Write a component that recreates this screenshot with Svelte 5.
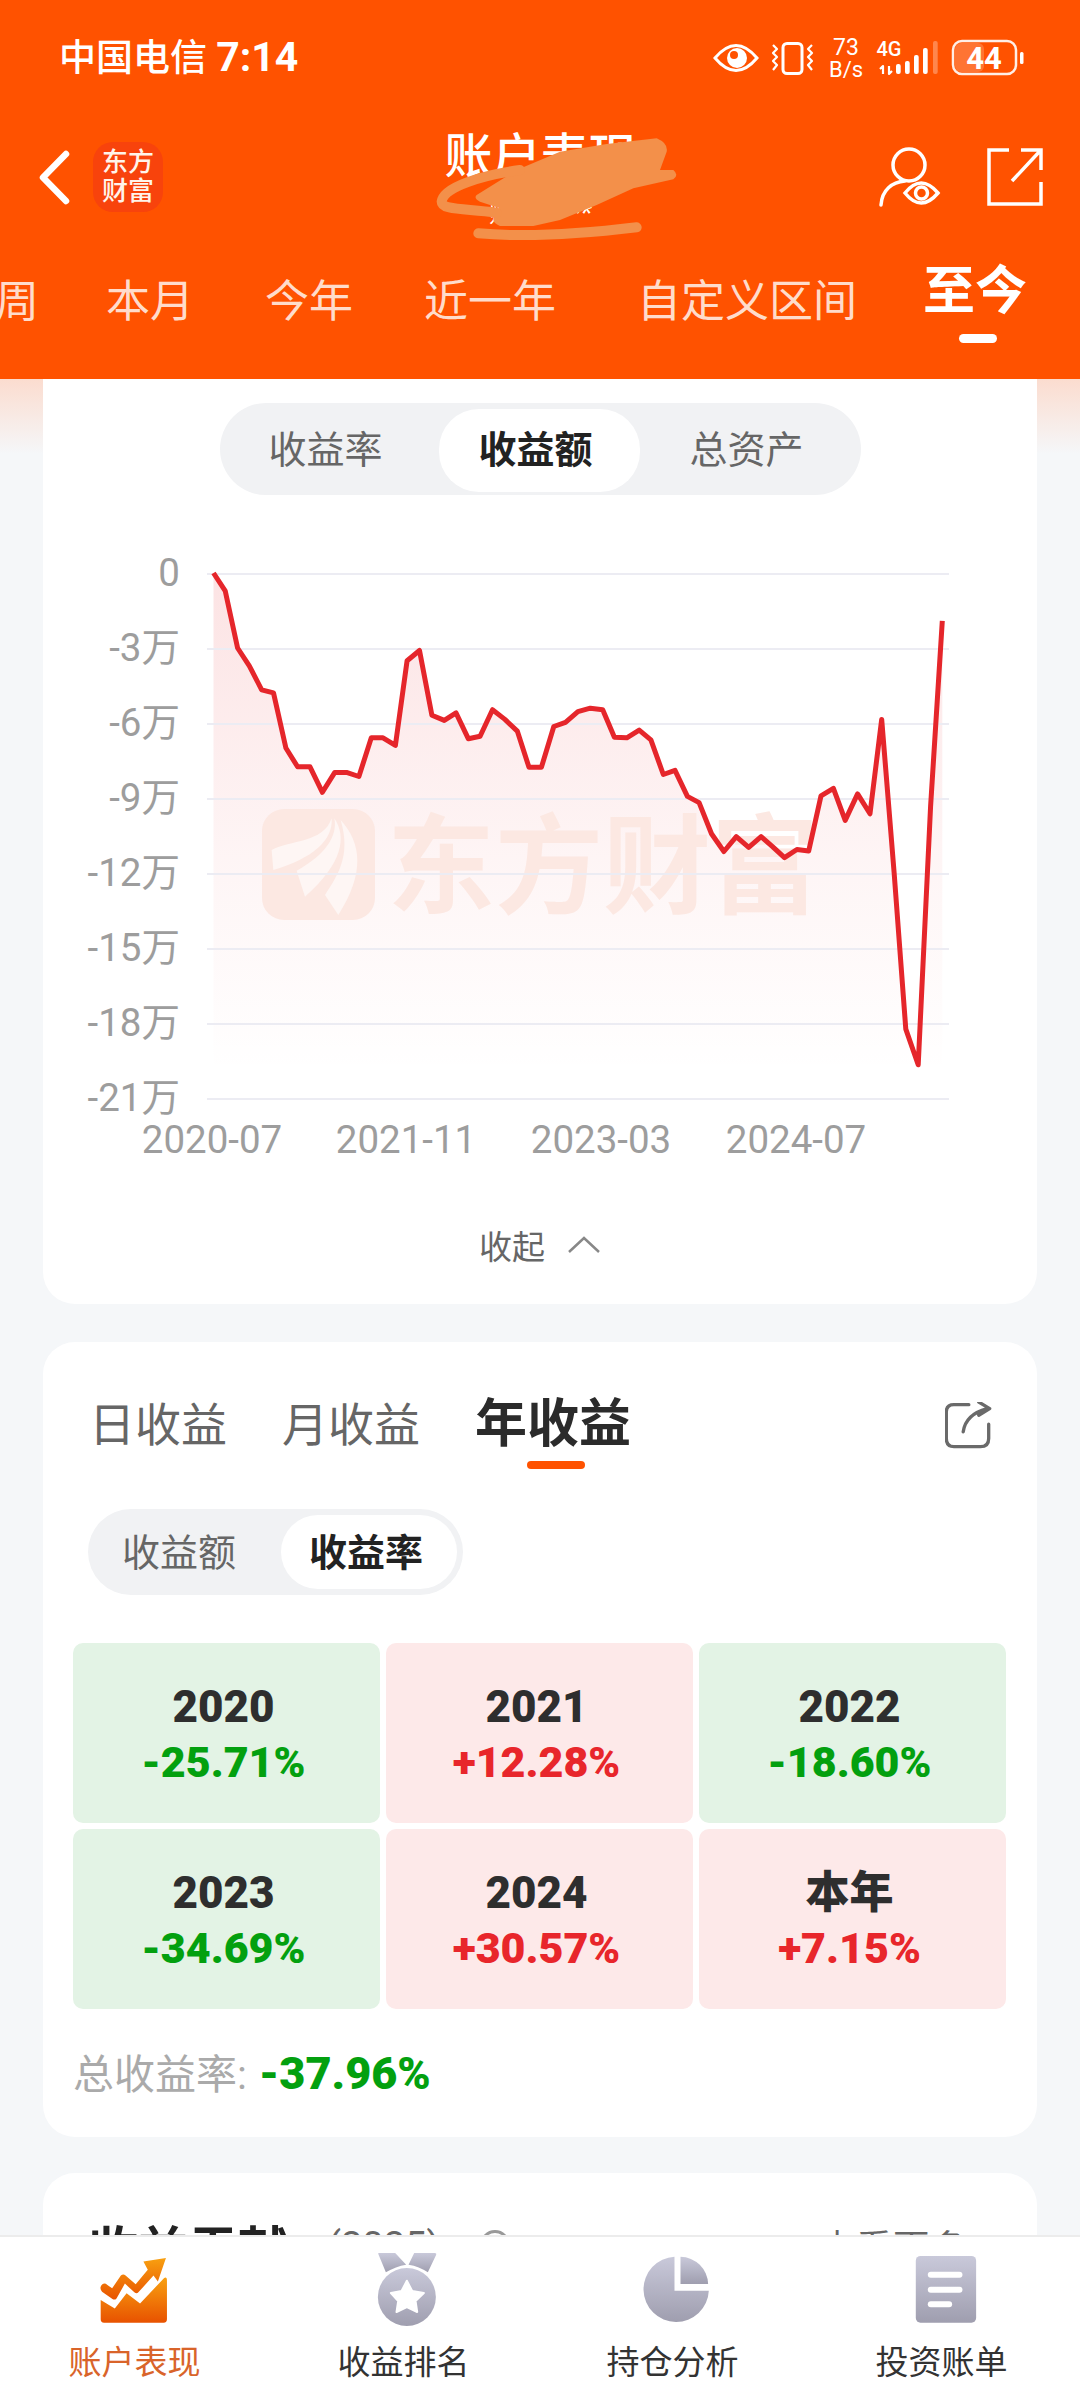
<script>
  const raw = [[310,143],[327,178],[345,290],[362,325],[380,372],[397,378],[415,486],[432,523],[450,523],[468,573],[486,534],[503,534],[521,542],[539,466],[556,466],[574,481],[591,315],[609,295],[627,422],[645,432],[662,417],[680,468],[697,463],[715,411],[733,430],[751,453],[768,524],[786,524],[804,444],[821,436],[839,415],[857,408],[875,411],[892,465],[910,466],[928,451],[945,470],[963,538],[980,530],[998,581],[1015,593],[1033,654],[1051,689],[1069,660],[1087,681],[1105,660],[1122,680],[1139,701],[1157,685],[1174,688],[1192,580],[1210,565],[1227,628],[1245,576],[1263,615],[1280,430],[1298,730],[1315,1037],[1333,1107],[1351,600],[1368,237]];
  const pts = raw.map(([x, y]) => [+(x / 1.4518).toFixed(1), +(y / 1.96 + 500).toFixed(1)]);
  const line = pts.map((p) => p.join(',')).join(' ');
  const area = `${pts[0][0]},1100 ${line} ${pts[pts.length - 1][0]},1100`;
  const yTicks = ['0', '-3万', '-6万', '-9万', '-12万', '-15万', '-18万', '-21万'].map((label, i) => ({ label, y: 574 + i * 75 }));
  const xTicks = [['2020-07', 212], ['2021-11', 406], ['2023-03', 601], ['2024-07', 796]];
  const periods = [
    { t: '周' }, { t: '本月' }, { t: '今年' }, { t: '近一年', wide: true }, { t: '自定义区间' }, { t: '至今', active: true }
  ];
  const cells = [
    ['2020', '-25.71%', 'down'], ['2021', '+12.28%', 'up'], ['2022', '-18.60%', 'down'],
    ['2023', '-34.69%', 'down'], ['2024', '+30.57%', 'up'], ['本年', '+7.15%', 'up']
  ];
</script>

<div class="page">
  <header class="head">
    <div class="status">
      <span class="carrier">中国电信 <b>7:14</b></span>
      <svg class="sys" viewBox="705 35 320 44" width="320" height="44">
        <path class="ln" d="M715,57 Q736,32 757,57 Q736,82 715,57 Z" />
        <circle class="wf" cx="737" cy="57" r="10" />
        <circle class="of" cx="734" cy="54" r="4" />
        <rect class="ln" x="783" y="42.5" width="19" height="30" rx="4" />
        <polyline class="ln2" points="773,44 777,48 773,52 777,56 773,60 777,64 773,69" />
        <polyline class="ln2" points="812,44 808,48 812,52 808,56 812,60 808,64 812,69" />
        <text class="t73" x="846" y="54" text-anchor="middle">73</text>
        <text class="t73b" x="846" y="75.5" text-anchor="middle">B/s</text>
        <text class="t4g" x="889" y="55" text-anchor="middle">4G</text>
        <path class="ln2" d="M883,73 V65 L880,68 M889,65 V73 L892,70" />
        <rect class="wf" x="896" y="63" width="4.7" height="10" rx="2" />
        <rect class="wf" x="905" y="60" width="4.7" height="13" rx="2" />
        <rect class="wf" x="914" y="54" width="4.7" height="19" rx="2" />
        <rect class="wf" x="923" y="47" width="4.7" height="26" rx="2" />
        <rect class="wf faded" x="933" y="40" width="4.7" height="33" rx="2" />
        <rect class="fillb" x="955" y="42" width="29" height="29" rx="6" />
        <rect class="ln bat" x="953" y="40" width="63" height="33" rx="9" />
        <text class="t44" x="984" y="67.5" text-anchor="middle">44</text>
        <rect class="wf" x="1020" y="51" width="3.5" height="12" rx="1.5" />
      </svg>
    </div>

    <div class="titlebar">
      <div class="tb-left">
        <svg class="back" viewBox="0 0 33 55" width="33" height="55"><polyline points="28,4 5,27.5 28,51" /></svg>
        <div class="brand">东方<br />财富</div>
      </div>
      <div class="title">
        <div class="title-main">账户表现</div>
        <div class="title-sub">账号 ****</div>
      </div>
      <div class="tb-right">
        <svg class="ti-user" viewBox="0 0 64 62" width="64" height="62">
          <circle cx="31" cy="19" r="16" />
          <path d="M3,59 C4,44 14,36 27,35" />
          <path d="M27,47 Q43,27 60,47 Q43,67 27,47 Z" />
          <circle cx="43.500" cy="47" r="6" />
        </svg>
        <svg class="ti-share" viewBox="0 0 56 58" width="56" height="58">
          <path d="M22,2 H2 V56 H54 V34" />
          <path d="M25,33 L53,3 M34,2 H54 V22" />
        </svg>
      </div>
    </div>

    <div class="periods">
      {#each periods as p}
        <span class="period" class:active={p.active} class:wide={p.wide}>{p.t}</span>
      {/each}
    </div>

    <svg class="scribble" viewBox="0 0 900 390" width="300" height="130" aria-hidden="true">
      <path class="blob" d="M230,225 L350,150 L480,95 L620,72 L770,55 Q805,70 800,95 L780,150 L820,150 Q838,165 820,178 L700,205 L590,255 L480,300 L400,318 L300,318 Q270,305 285,285 L300,265 L240,245 Q220,235 230,225 Z" />
      <path class="stroke" d="M360,150 C250,165 130,200 125,245 C125,270 190,265 290,278" />
      <path class="stroke" d="M235,340 C350,350 520,345 710,322" />
    </svg>
  </header>

  <main class="main">
    <section class="card chart-card">
      <div class="seg3">
        <span>收益率</span>
        <span class="on">收益额</span>
        <span>总资产</span>
      </div>

      <svg class="chart" viewBox="43 495 994 700" width="994" height="700">
        <defs>
          <linearGradient id="areaFill" x1="0" y1="0" x2="0" y2="1">
            <stop offset="0" stop-color="#e8262b" stop-opacity="0.13" />
            <stop offset="0.55" stop-color="#e8262b" stop-opacity="0.045" />
            <stop offset="0.95" stop-color="#e8262b" stop-opacity="0" />
          </linearGradient>
        </defs>
        <polygon points={area} fill="url(#areaFill)" />
        <rect class="wm" x="262" y="809" width="113" height="111" rx="22" />
        <g transform="translate(250 800) scale(0.3333)">
          <path class="wm-p" d="M65,150 C120,120 220,130 245,55 C250,120 190,175 70,210 Z" />
          <path class="wm-p" d="M140,212 C220,170 265,110 253,55 C290,110 280,190 165,290 Z" />
          <path class="wm-p" d="M272,60 C335,130 345,220 265,345 L225,285 C260,230 305,170 272,60 Z" />
        </g>
        <text class="wm-t" x="387" y="905">东方财富</text>
        {#each yTicks as t}
          <line class="grid" x1="207" x2="949" y1={t.y} y2={t.y} />
          <text class="axis" x="180" y={t.y + 12} text-anchor="end">{t.label}</text>
        {/each}
        {#each xTicks as [label, x]}
          <text class="axis" x={x} y="1153" text-anchor="middle">{label}</text>
        {/each}
        <polyline class="curve" points={line} />
      </svg>

      <div class="collapse">
        <span>收起</span>
        <svg viewBox="0 0 34 18" width="34" height="18"><polyline points="2,16 17,2 32,16" /></svg>
      </div>
    </section>

    <section class="card year-card">
      <div class="tabs">
        <span class="tab">日收益</span>
        <span class="tab">月收益</span>
        <span class="tab active">年收益</span>
        <svg class="share" viewBox="48 30 142 142" width="47" height="47">
          <path d="M120,38 H75 Q52,38 52,60 V140 Q52,165 75,165 H155 Q180,165 180,140 V97" />
          <path d="M103,120 C108,85 130,62 175,50 M150,30 L183,50 L150,70" />
        </svg>
      </div>

      <div class="seg2">
        <span>收益额</span>
        <span class="on">收益率</span>
      </div>

      <div class="years">
        {#each cells as [y, v, dir]}
          <div class="cell {dir}">
            <div class="yr">{y}</div>
            <div class="val">{v}</div>
          </div>
        {/each}
      </div>

      <div class="total"><span class="total-l">总收益率:</span> <span class="total-v">-37.96%</span></div>
    </section>

    <section class="card contrib">
      <div class="contrib-row">
        <span class="contrib-h">收益贡献</span>
        <span class="contrib-y">(2025)</span>
        <span class="contrib-i"></span>
        <span class="contrib-m">查看更多 ›</span>
      </div>
    </section>
  </main>

  <nav class="nav">
    <div class="nav-i on">
      <svg viewBox="120 160 220 210" width="74" height="74">
        <defs>
          <linearGradient id="navO" x1="0" y1="0" x2="0" y2="1">
            <stop offset="0" stop-color="#f8a010" />
            <stop offset="1" stop-color="#e85200" />
          </linearGradient>
          <linearGradient id="navG" x1="0" y1="0" x2="0" y2="1">
            <stop offset="0" stop-color="#c9c9da" />
            <stop offset="1" stop-color="#9f9eaf" />
          </linearGradient>
        </defs>
        <path fill="url(#navO)" d="M128,295 L170,320 L205,275 L245,305 L316,230 Q325,224 325,238 V352 Q325,362 315,362 H138 Q128,362 128,352 Z" />
        <path fill="url(#navO)" d="M255,180 L322,170 L298,240 L285,222 L240,272 Q235,278 228,272 L200,246 L175,290 Q170,296 163,292 L132,270 Q122,258 133,248 Q140,243 148,250 L162,260 L188,222 Q195,216 202,222 L232,248 L268,205 Z" />
      </svg>
      <span>账户表现</span>
    </div>
    <div class="nav-i">
      <svg viewBox="0 0 74 74" width="74" height="74">
        <g transform="translate(-306.1 -53.300) scale(0.3333)">
          <path fill="url(#navG)" d="M952,162 Q950,160 955,160 H1003 L1036,195 Q1005,200 975,218 Z" />
          <path fill="url(#navG)" d="M1060,160 H1122 Q1128,160 1126,165 L1101,218 Q1075,200 1043,195 Z" />
          <circle fill="url(#navG)" cx="1038" cy="292" r="87" />
          <path fill="#fff" d="M1038,243 L1054,274 L1089,280 L1064,304 L1069,337 L1038,322 L1007,337 L1012,304 L990,280 L1022,274 Z" stroke="#fff" stroke-width="6" stroke-linejoin="round" />
        </g>
      </svg>
      <span>收益排名</span>
    </div>
    <div class="nav-i">
      <svg viewBox="0 0 74 74" width="74" height="74">
        <g transform="translate(-75.5 -53) scale(0.3333)">
          <path fill="url(#navG)" d="M342,170 A98,98 0 1 0 445,272 L342,272 Z" />
          <path fill="url(#navG)" d="M360,170 A85,85 0 0 1 443,252 L360,252 Z" />
        </g>
      </svg>
      <span>持仓分析</span>
    </div>
    <div class="nav-i">
      <svg viewBox="0 0 74 74" width="74" height="74">
        <g transform="translate(-344.5 -53) scale(0.3333)">
          <rect fill="url(#navG)" x="1066" y="168" width="181" height="200" rx="14" />
          <rect fill="#fff" x="1102" y="215" width="104" height="18" rx="9" />
          <rect fill="#fff" x="1102" y="260" width="104" height="18" rx="9" />
          <rect fill="#fff" x="1102" y="304" width="73" height="18" rx="9" />
        </g>
      </svg>
      <span>投资账单</span>
    </div>
  </nav>
</div>

<style>
  :global(body) {
    margin: 0;
    background: #f5f7f9;
  }
  .page {
    width: 1080px;
    height: 2400px;
    display: flex;
    flex-direction: column;
    overflow: hidden;
    font-family: Roboto, "Noto Sans CJK SC", sans-serif;
    background: #f5f7f9;
  }
  svg { display: block; flex: none; }

  .head {
    position: relative;
    flex: none;
    height: 379px;
    background: #ff5200;
    color: #fff;
    overflow: hidden;
  }
  .status {
    height: 115px;
    display: flex;
    align-items: center;
    justify-content: space-between;
    padding: 0 55px 0 59px;
  }
  .carrier { font-size: 37px; font-weight: 500; margin-top: -5px; }
  .carrier b { font-size: 41px; font-weight: 700; }
  .sys .ln { fill: none; stroke: #fff; stroke-width: 3; }
  .sys .ln2 { fill: none; stroke: #fff; stroke-width: 2.2; stroke-linejoin: round; }
  .sys .wf { fill: #fff; }
  .sys .of { fill: #ff5200; }
  .sys .faded { opacity: 0.3; }
  .sys .fillb { fill: #fff; opacity: 0.2; }
  .sys .bat { stroke-width: 2.500; opacity: 0.9; }
  .t73 { fill: #fff; font-size: 23px; }
  .t73b { fill: #fff; font-size: 22px; }
  .t4g { fill: #fff; font-size: 20px; font-weight: 500; }
  .t44 { fill: #fff; font-size: 31px; font-weight: 700; }

  .titlebar {
    height: 125px;
    display: grid;
    grid-template-columns: 1fr auto 1fr;
    padding: 0 37px 0 38px;
  }
  .tb-left { display: flex; align-items: center; gap: 22px; height: 124px; }
  .back polyline { fill: none; stroke: #fff; stroke-width: 6.500; stroke-linecap: round; stroke-linejoin: round; }
  .brand {
    width: 70px;
    height: 70px;
    border-radius: 20px;
    background: #f8430c;
    text-align: center;
    font-size: 26px;
    font-weight: 500;
    line-height: 29px;
    padding-top: 6px;
    box-sizing: border-box;
    color: #fff4ea;
  }
  .title { width: 300px; text-align: center; padding-top: 11px; }
  .title-main { font-size: 48px; line-height: 62px; font-weight: 500; }
  .title-sub { font-size: 26px; line-height: 40px; margin-top: 5px; }
  .tb-right { display: flex; justify-content: flex-end; align-items: center; gap: 45px; height: 124px; }
  .ti-user circle, .ti-user path, .ti-share path {
    fill: none;
    stroke: #fff;
    stroke-width: 3.500;
  }
  .ti-user path { stroke-linecap: round; }

  .periods {
    display: flex;
    gap: 71px;
    margin-left: -5px;
    padding-top: 32px;
    white-space: nowrap;
  }
  .period { font-size: 44px; line-height: 60px; color: #ffdccb; }
  .period:first-child { margin-right: -4px; }
  .period.wide { margin-right: 10px; }
  .period.active {
    position: relative;
    font-size: 52px;
    font-weight: 700;
    color: #fff;
    margin: -10px 0 0 -5px;
  }
  .period.active::after {
    content: "";
    position: absolute;
    left: 36px;
    top: 72px;
    width: 38px;
    height: 9px;
    border-radius: 5px;
    background: #fff;
  }
  .scribble { position: absolute; left: 400px; top: 120px; }
  .blob { fill: #f3904a; }
  .stroke { fill: none; stroke: #f3904a; stroke-width: 30; stroke-linecap: round; }

  .main {
    flex: 1;
    min-height: 0;
    overflow: hidden;
    padding: 0 43px;
    background: linear-gradient(#fbdccf 0, #f5f7f9 75px);
  }
  .card { background: #fff; border-radius: 32px; }
  .chart-card {
    height: 925px;
    border-radius: 0 0 32px 32px;
    padding-top: 24px;
    box-sizing: border-box;
  }
  .seg3 {
    margin-left: 177px;
    width: 641px;
    height: 92px;
    box-sizing: border-box;
    padding: 6px 0;
    border-radius: 46px;
    background: #f1f2f4;
    display: grid;
    grid-template-columns: 219px 201px 221px;
    font-size: 38px;
    color: #666;
    text-align: center;
    line-height: 83px;
  }
  .seg3 span { padding-right: 8px; box-sizing: border-box; }
  .seg3 .on { background: #fff; border-radius: 40px; color: #222; font-weight: 700; }
  .collapse {
    height: 100px;
    display: flex;
    align-items: center;
    justify-content: center;
    gap: 22px;
    font-size: 33px;
    color: #666;
    padding-right: 0;
  }
  .collapse polyline { fill: none; stroke: #888; stroke-width: 2.500; }

  .curve { fill: none; stroke: #e5262b; stroke-width: 5; stroke-linejoin: round; }
  .grid { stroke: #ececf3; stroke-width: 2; }
  .axis { fill: #9d9d9d; font-size: 38.500px; }
  .wm { fill: #fce8e2; }
  .wm-p { fill: #fef6f4; }
  .wm-t { fill: #fce8e2; font-size: 108px; font-weight: 700; }

  .year-card { margin-top: 38px; height: 795px; padding-top: 52px; box-sizing: border-box; }
  .tabs {
    display: flex;
    align-items: center;
    gap: 55px;
    height: 62px;
    padding: 0 45px 0 46px;
    font-size: 46px;
    color: #666;
  }
  .tab { position: relative; line-height: 62px; }
  .tab.active { font-size: 52px; font-weight: 700; color: #2b2b2b; }
  .tab.active::after {
    content: "";
    position: absolute;
    left: 52px;
    top: 67px;
    width: 58px;
    height: 8px;
    border-radius: 4px;
    background: #ff5200;
  }
  .share { margin-left: auto; }
  .share path { fill: none; stroke: #6a6a6a; stroke-width: 10; stroke-linecap: round; stroke-linejoin: round; }

  .seg2 {
    margin: 53px 0 0 45px;
    width: 375px;
    height: 86px;
    box-sizing: border-box;
    border-radius: 43px;
    background: #f1f2f4;
    padding: 6px 6px 6px 34px;
    display: flex;
    justify-content: space-between;
    font-size: 38px;
    line-height: 76px;
    color: #666;
  }
  .seg2 .on {
    width: 176px;
    height: 74px;
    padding-right: 6px;
    box-sizing: border-box;
    text-align: center;
    background: #fff;
    border-radius: 37px;
    color: #222;
    font-weight: 700;
  }

  .years {
    margin: 48px 31px 0 30px;
    display: grid;
    grid-template-columns: repeat(3, 1fr);
    gap: 6px;
  }
  .cell {
    height: 180px;
    border-radius: 10px;
    padding: 37px 6px 0 0;
    box-sizing: border-box;
    text-align: center;
    font-weight: 900;
    line-height: 55px;
  }
  .cell.down { background: #e3f3e5; color: #03a00f; }
  .cell.up { background: #fde9e9; color: #e8262b; }
  .yr { font-size: 44px; color: #2e2e2e; }
  .val { font-size: 43px; }

  .total { margin: 35px 0 0 30px; font-size: 41px; line-height: 60px; }
  .total-l { color: #aaa; }
  .total-v { color: #03a00f; font-weight: 900; font-size: 45px; margin-left: 2px; }

  .contrib { margin-top: 36px; height: 300px; padding: 43px 50px 0 45px; box-sizing: border-box; }
  .contrib-row { display: flex; align-items: center; height: 60px; }
  .contrib-h { font-size: 50px; font-weight: 700; color: #222; }
  .contrib-y { margin-left: 40px; font-size: 38px; color: #666; }
  .contrib-i {
    margin-left: 40px;
    align-self: flex-start;
    margin-top: 14px;
    width: 30px;
    height: 30px;
    border: 3px solid #999;
    border-radius: 50%;
    box-sizing: border-box;
  }
  .contrib-m { margin-left: auto; font-size: 37px; color: #666; }

  .nav {
    flex: none;
    height: 165px;
    box-sizing: border-box;
    border-top: 2px solid #ececec;
    background: #fff;
    display: grid;
    grid-template-columns: repeat(4, 1fr);
    padding: 16px 4px 0 0;
    position: relative;
  }
  .nav-i { display: flex; flex-direction: column; align-items: center; }
  .nav-i span { margin-top: 16px; font-size: 33px; line-height: 40px; color: #333; }
  .nav-i.on span { color: #d9642a; }
</style>
